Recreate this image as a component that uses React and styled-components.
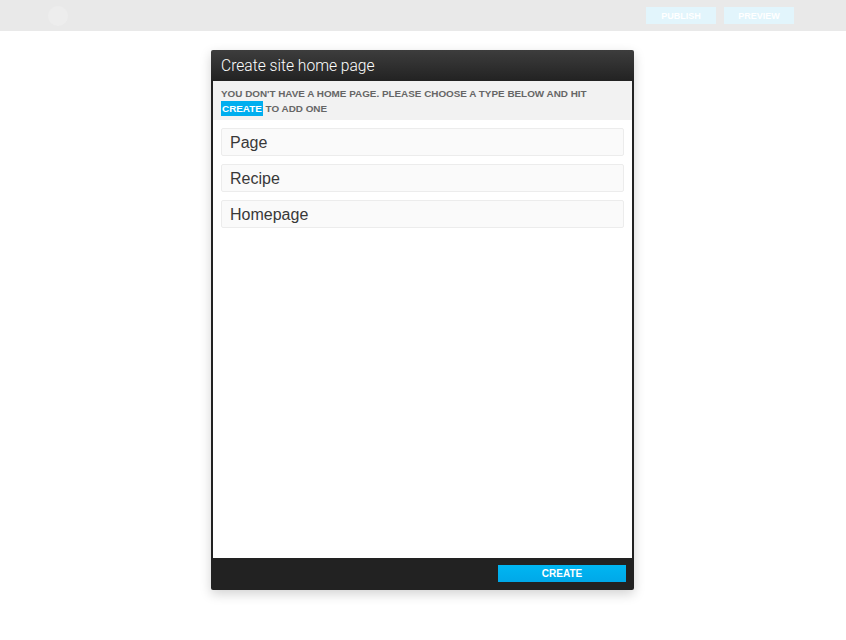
import React from "react";
import styled, { createGlobalStyle } from "styled-components";

const GlobalStyle = createGlobalStyle`
  html, body {
    margin: 0;
    padding: 0;
    background: #ffffff;
    font-family: "Liberation Sans", Arial, sans-serif;
  }
`;

const types = ["Page", "Recipe", "Homepage"];

const App = () => {
  return (
    <Wrap>
      <GlobalStyle />
      <TopBar>
        <Avatar />
        <Actions>
          <GhostBtn>PUBLISH</GhostBtn>
          <GhostBtn>PREVIEW</GhostBtn>
        </Actions>
      </TopBar>
      <Stage>
        <Modal>
          <ModalHeader>Create site home page</ModalHeader>
          <Notice>
            YOU DON'T HAVE A HOME PAGE. PLEASE CHOOSE A TYPE BELOW AND HIT{" "}
            <Highlight>CREATE</Highlight> TO ADD ONE
          </Notice>
          <ModalBody>
            {types.map((t) => (
              <TypeItem key={t}>{t}</TypeItem>
            ))}
          </ModalBody>
          <ModalFooter>
            <CreateBtn>CREATE</CreateBtn>
          </ModalFooter>
        </Modal>
      </Stage>
    </Wrap>
  );
};

export default App;

const Wrap = styled.div`
  width: 846px;
  height: 640px;
  background: #fff;
  overflow: hidden;
`;

const TopBar = styled.div`
  display: flex;
  align-items: center;
  justify-content: space-between;
  height: 31px;
  padding: 0 52px 0 48px;
  background: #e9e9e9;
`;

const Avatar = styled.div`
  width: 20px;
  height: 20px;
  border-radius: 50%;
  background: #ededed;
`;

const Actions = styled.div`
  display: flex;
  gap: 8px;
`;

const GhostBtn = styled.div`
  display: flex;
  align-items: center;
  justify-content: center;
  width: 70px;
  height: 17px;
  background: #e2f5fc;
  color: #ffffff;
  font-size: 9px;
  font-weight: 700;
`;

const Stage = styled.div`
  display: flex;
  padding: 19px 0 0 211px;
`;

const Modal = styled.div`
  display: flex;
  flex-direction: column;
  width: 423px;
  height: 540px;
  border-radius: 2px;
  overflow: hidden;
  box-shadow: 0 4px 12px rgba(0, 0, 0, 0.18);
`;

const ModalHeader = styled.div`
  height: 31px;
  flex-shrink: 0;
  padding: 0 10px;
  display: flex;
  align-items: center;
  background: linear-gradient(#3d3d3d, #222222);
  color: #ffffff;
  font-family: Roboto, "Liberation Sans", sans-serif;
  font-weight: 300;
  font-size: 15.6px;
`;

const Notice = styled.div`
  flex-shrink: 0;
  padding: 5px 10px 4px 8px;
  background: #f2f2f2;
  color: #666;
  font-size: 9.9px;
  font-weight: 700;
  line-height: 15px;
  border-left: 2px solid #222;
  border-right: 2px solid #222;
`;

const Highlight = styled.span`
  display: inline-block;
  padding: 0 1px;
  background: #00aeef;
  color: #ffffff;
  line-height: 15px;
`;

const ModalBody = styled.div`
  flex: 1;
  display: flex;
  flex-direction: column;
  gap: 8px;
  padding: 8px 8px;
  background: #ffffff;
  border-left: 2px solid #222;
  border-right: 2px solid #222;
`;

const TypeItem = styled.div`
  height: 26px;
  display: flex;
  align-items: center;
  padding: 1px 8px 0 8px;
  box-sizing: border-box;
  height: 28px;
  background: #fafafa;
  border: 1px solid #ececec;
  border-radius: 2px;
  color: #383838;
  font-size: 16px;
`;

const ModalFooter = styled.div`
  height: 32px;
  flex-shrink: 0;
  display: flex;
  justify-content: flex-end;
  align-items: flex-start;
  padding: 7px 8px 0 0;
  box-sizing: border-box;
  background: #222222;
`;

const CreateBtn = styled.div`
  width: 128px;
  height: 17px;
  display: flex;
  align-items: center;
  justify-content: center;
  background: linear-gradient(#00b6f2, #00a8e8);
  color: #ffffff;
  font-size: 10px;
  font-weight: 700;
`;
